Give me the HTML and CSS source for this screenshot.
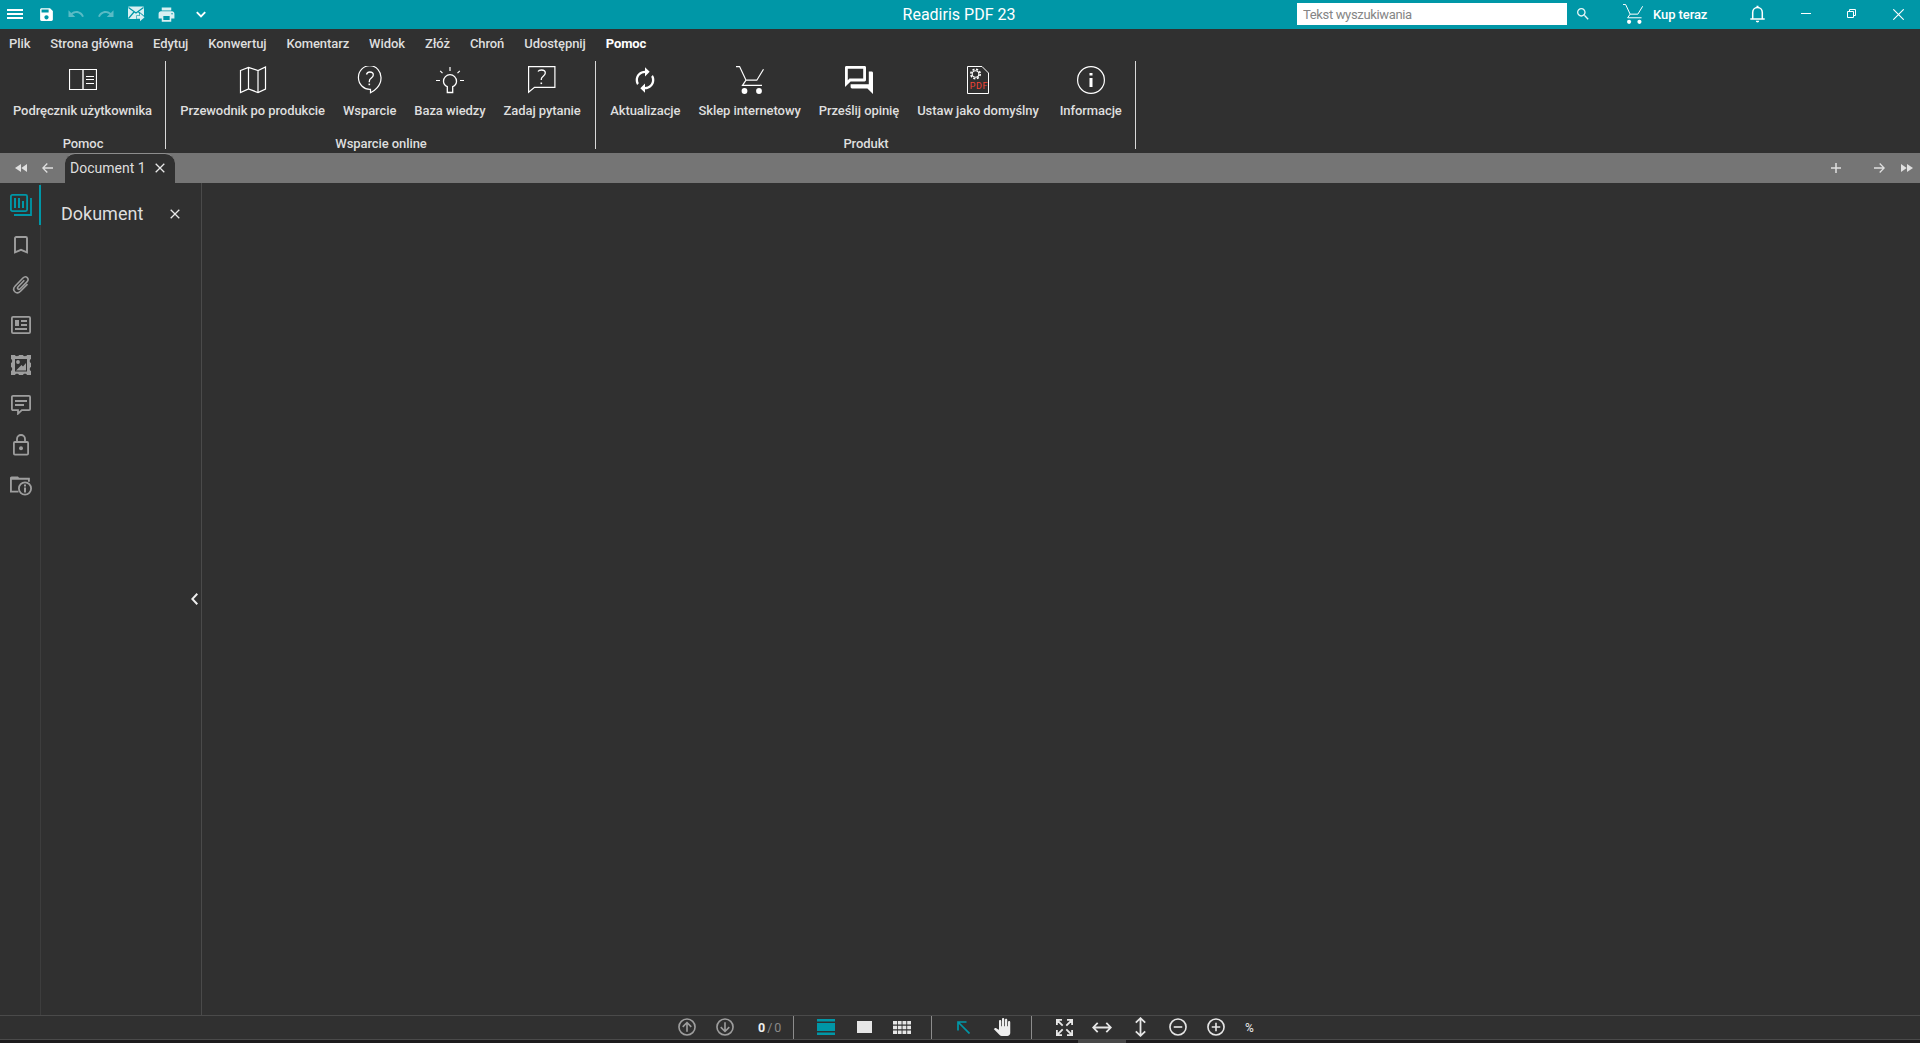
FILE: index.html
```
<!DOCTYPE html>
<html lang="pl">
<head>
    <meta charset="UTF-8">
    <meta name="viewport" content="width=device-width, initial-scale=1.0">
    <title>Readiris PDF 23</title>
    <link rel="stylesheet" href="styles.css">
</head>
<body>
<div class="app">

    <!-- Title bar -->
    <header class="titlebar">
        <div class="quick">
            <button class="qbtn first"><svg width="16" height="10" viewBox="0 0 16 10"><path d="M0 1h16M0 5h16M0 9h16" stroke="#fff" stroke-width="1.800"/></svg></button>
            <button class="qbtn"><svg viewBox="0 0 24 24" fill="#fff" class="save"><path d="M17 3H5c-1.110 0-2 .9-2 2v14c0 1.100.89 2 2 2h14c1.100 0 2-.9 2-2V7l-4-4zm-5 16c-1.660 0-3-1.340-3-3s1.340-3 3-3 3 1.340 3 3-1.340 3-3 3zm3-10H5V5h10v4z"/></svg></button>
            <button class="qbtn dim"><svg width="18" height="18" viewBox="0 0 24 24" fill="#fff"><path d="M12.500 8c-2.650 0-5.050.99-6.900 2.600L2 7v9h9l-3.620-3.620c1.390-1.160 3.160-1.880 5.120-1.880 3.540 0 6.550 2.310 7.600 5.500l2.370-.78C21.080 11.030 17.150 8 12.500 8z"/></svg></button>
            <button class="qbtn dim"><svg width="18" height="18" viewBox="0 0 24 24" fill="#fff"><path d="M18.400 10.600C16.550 8.990 14.150 8 11.500 8c-4.650 0-8.580 3.030-9.960 7.220L3.900 16c1.050-3.190 4.050-5.500 7.600-5.500 1.950 0 3.730.72 5.120 1.880L13 16h9V7l-3.600 3.600z"/></svg></button>
            <button class="qbtn"><svg width="17" height="16" viewBox="0 0 17 16"><path d="M0 1.500Q0 .5 1 .5H15Q16 .5 16 1.500V13H1Q0 13 0 12Z" fill="#d9f0f2"/><path d="M.5 1.500 8 7l7.500-5.500M.5 12.500 6 6M15.500 10 10.500 6" fill="none" stroke="#0097a7" stroke-width="1.200"/><path d="M9 9.800h3V7.300l4.500 4-4.500 4v-2.600H9z" fill="#d9f0f2" stroke="#0097a7" stroke-width="1.200" paint-order="stroke"/></svg></button>
            <button class="qbtn"><svg width="19" height="19" viewBox="0 0 24 24" fill="#d9f0f2"><path d="M19 8H5c-1.660 0-3 1.340-3 3v6h4v4h12v-4h4v-6c0-1.660-1.340-3-3-3zm-3 11H8v-5h8v5zm3-7c-.55 0-1-.45-1-1s.45-1 1-1 1 .45 1 1-.45 1-1 1zm-1-9H6v4h12V3z"/></svg></button>
            <button class="qbtn more"><svg width="10" height="7" viewBox="0 0 10 7"><path d="M.8 1.200 5 5.400 9.200 1.200" fill="none" stroke="#fff" stroke-width="1.900"/></svg></button>
        </div>
        <div class="app-title">Readiris PDF 23</div>
        <div class="title-right">
            <input class="search" type="text" placeholder="Tekst wyszukiwania">
            <button class="tbtn find"><svg width="16" height="16" viewBox="0 0 24 24" fill="#e8f6f7"><path d="M15.500 14h-.79l-.28-.27C15.410 12.590 16 11.110 16 9.500 16 5.910 13.090 3 9.500 3S3 5.910 3 9.500 5.910 16 9.500 16c1.610 0 3.090-.59 4.230-1.570l.27.28v.79l5 4.990L20.490 19l-4.990-5zm-6 0C7.010 14 5 11.990 5 9.500S7.010 5 9.500 5 14 7.010 14 9.500 11.990 14 9.500 14z"/></svg></button>
            <button class="tbtn buy">
                <svg width="20" height="20" viewBox="0 0 28 28"><path d="M0 .6h3.600L10 14.200h10.800L27.500 3.200M10 14.200 6.500 19.300H26" fill="none" stroke="#fff" stroke-width="1.400"/><circle cx="8.500" cy="25" r="2.900" fill="#fff"/><circle cx="23" cy="25" r="2.900" fill="#fff"/></svg>
                <span>Kup teraz</span>
            </button>
            <button class="tbtn bell"><svg width="15" height="18" viewBox="0 0 15 18"><path d="M2.700 13.200V7.500C2.700 4.700 4.600 2.500 7.500 2.500s4.800 2.200 4.800 5v5.700M.3 14h14.400" fill="none" stroke="#fff" stroke-width="1.500"/><path d="M6.500.8h2v2h-2zM5.800 15.700h3.400a1.700 1.700 0 0 1-3.400 0z" fill="#fff"/></svg></button>
            <button class="tbtn minimize"><svg width="10" height="10" viewBox="0 0 10 10"><path d="M0 4.500h10" stroke="#fff"/></svg></button>
            <button class="tbtn restore"><svg width="9" height="10" viewBox="0 0 9 10"><path d="M.5 2.500h6v6h-6zM2.500 2.500v-2h6v6h-2" fill="none" stroke="#fff"/></svg></button>
            <button class="tbtn close"><svg width="11" height="11" viewBox="0 0 11 11"><path d="M.3.3l10.400 10.400M10.700.3.300 10.700" stroke="#fff" stroke-width="1.100"/></svg></button>
        </div>
    </header>

    <!-- Menu -->
    <nav class="menu">
        <a>Plik</a><a>Strona główna</a><a>Edytuj</a><a>Konwertuj</a><a>Komentarz</a><a>Widok</a><a>Złóż</a><a>Chroń</a><a>Udostępnij</a><a class="active">Pomoc</a>
    </nav>

    <!-- Ribbon -->
    <div class="ribbon">
        <section class="group g-help">
            <div class="tools">
                <div class="tool">
                    <svg width="28" height="28" viewBox="0 0 28 28"><path d="M.5 3.500h27v20H.5z" fill="none" stroke="#fff" stroke-width="1.200"/><path d="M14 4v19" stroke="#ccc" stroke-width="1.800"/><path d="M17 10.500h8M17 13.500h8M17 17.500h8" stroke="#fff" stroke-width="1.200"/></svg>
                    <span>Podręcznik użytkownika</span>
                </div>
            </div>
            <div class="group-name">Pomoc</div>
        </section>
        <section class="group g-online">
            <div class="tools">
                <div class="tool">
                    <svg width="28" height="28" viewBox="0 0 28 28"><path d="M1.500 4.500 9.500 1.500l9.500 3 7.500-3.500v22l-7.500 3.500-9.500-3.500-8 3.500zM9.500 1.500V23M19 4.500v22" fill="none" stroke="#fff" stroke-width="1.200"/></svg>
                    <span>Przewodnik po produkcie</span>
                </div>
                <div class="tool">
                    <svg width="28" height="28" viewBox="0 0 28 28"><path d="M14.500 23.300v3.500c4-1.800 10.500-7 10.500-14.500A11.300 11.800 0 1 0 14.500 23.300z" fill="none" stroke="#fff" stroke-width="1.200"/><path d="M10.500 8.500C11 6.500 12 6 13.800 6c2.200 0 3.500 1.100 3.500 3 0 3-4 3.200-4 6.200v1" fill="none" stroke="#fff" stroke-width="1.300"/><path d="M12.500 17.600h1.600v1.600h-1.600z" fill="#fff"/></svg>
                    <span>Wsparcie</span>
                </div>
                <div class="tool">
                    <svg width="28" height="28" viewBox="0 0 28 28"><path d="M11.300 26.500v-5.800C8.800 19.500 7.500 17.700 7.500 15.200a6.500 6.500 0 0 1 13 0c0 2.500-1.300 4.300-3.800 5.500v5.800z" fill="none" stroke="#fff" stroke-width="1.300"/><path d="M14 1v4M0 14.500h4M24 14.500h4M4.200 4.800l2.300 2.300M23.800 4.800l-2.300 2.300" stroke="#fff" stroke-width="1.200"/></svg>
                    <span>Baza wiedzy</span>
                </div>
                <div class="tool">
                    <svg width="28" height="28" viewBox="0 0 28 28"><path d="M.6.6h26.300v20.700H6.500L.6 26.300z" fill="none" stroke="#fff" stroke-width="1.200"/><path d="M10 5.500c.6-1 1.900-1.500 3.500-1.500 2.300 0 3.800 1 3.800 3 0 3-4 3.300-4 6v1" fill="none" stroke="#fff" stroke-width="1.300"/><path d="M12.500 16.500h1.600v1.600h-1.600z" fill="#fff"/></svg>
                    <span>Zadaj pytanie</span>
                </div>
            </div>
            <div class="group-name">Wsparcie online</div>
        </section>
        <section class="group g-product">
            <div class="tools">
                <div class="tool">
                    <svg width="30" height="30" viewBox="0 0 24 24" fill="#fff"><path d="M12 6v3l4-4-4-4v3c-4.420 0-8 3.580-8 8 0 1.570.46 3.030 1.240 4.260L6.700 14.800c-.45-.83-.7-1.790-.7-2.800 0-3.310 2.690-6 6-6zm6.760 1.740L17.300 9.200c.44.84.7 1.790.7 2.800 0 3.310-2.690 6-6 6v-3l-4 4 4 4v-3c4.420 0 8-3.580 8-8 0-1.570-.46-3.030-1.240-4.260z"/></svg>
                    <span>Aktualizacje</span>
                </div>
                <div class="tool">
                    <svg width="28" height="28" viewBox="0 0 28 28"><path d="M0 .6h3.600L10 14.200h10.800L27.500 3.200M10 14.200 6.500 19.300H26" fill="none" stroke="#fff" stroke-width="1.200"/><circle cx="8.500" cy="25" r="2.900" fill="#fff"/><circle cx="23" cy="25" r="2.900" fill="#fff"/></svg>
                    <span>Sklep internetowy</span>
                </div>
                <div class="tool">
                    <svg width="28" height="28" viewBox="2 2 20 20" fill="#fff"><path d="M15 4v7H5.170L4 12.170V4h11m1-2H3c-.55 0-1 .45-1 1v14l4-4h10c.55 0 1-.45 1-1V3c0-.55-.45-1-1-1zm5 4h-2v9H6v2c0 .55.45 1 1 1h11l4 4V7c0-.55-.45-1-1-1z"/></svg>
                    <span>Prześlij opinię</span>
                </div>
                <div class="tool">
                    <svg width="22" height="28" viewBox="0 0 22 28"><path d="M.5.500H15L21.500 7v20.500H.500z" fill="none" stroke="#fff"/><circle cx="8.500" cy="8" r="4.700" fill="none" stroke="#fff" stroke-width="1.600" stroke-dasharray="2.100 1.590"/><circle cx="8.500" cy="8" r="3.300" fill="none" stroke="#fff" stroke-width="1.100"/><text x="2.800" y="22.700" class="pdf-text" textLength="17.500">PDF</text></svg>
                    <span>Ustaw jako domyślny</span>
                </div>
                <div class="tool last">
                    <svg width="28" height="28" viewBox="0 0 28 28"><circle cx="14" cy="14" r="13.400" fill="none" stroke="#fff" stroke-width="1.200"/><path d="M12.500 7h3v2.500h-3zM12.500 12h3v9h-3z" fill="#fff"/></svg>
                    <span>Informacje</span>
                </div>
            </div>
            <div class="group-name">Produkt</div>
        </section>
    </div>

    <!-- Document tabs -->
    <div class="tabs">
        <button class="nav-btn n1"><svg width="12" height="8" viewBox="0 0 12 8" fill="#e0e0e0"><path d="M6 0v8L0 4zM12 0v8L6.300 4z"/></svg></button>
        <button class="nav-btn n2"><svg width="11" height="10" viewBox="0 0 11 10"><path d="M11 5H1M5.300.5.8 5l4.500 4.500" fill="none" stroke="#e0e0e0" stroke-width="1.300"/></svg></button>
        <div class="tab">
            <span>Document 1</span>
            <svg width="10" height="10" viewBox="0 0 10 10"><path d="M.7.7l8.600 8.600M9.300.7.700 9.300" stroke="#e8e8e8" stroke-width="1.300"/></svg>
        </div>
        <div class="tabs-right">
            <button class="nav-btn add"><svg width="10" height="10" viewBox="0 0 10 10"><path d="M0 5h10M5 0v10" stroke="#e0e0e0" stroke-width="1.500"/></svg></button>
            <button class="nav-btn n3"><svg width="11" height="10" viewBox="0 0 11 10"><path d="M0 5h10M5.700.5 10.200 5 5.700 9.500" fill="none" stroke="#e0e0e0" stroke-width="1.300"/></svg></button>
            <button class="nav-btn n4"><svg width="12" height="8" viewBox="0 0 12 8" fill="#e0e0e0"><path d="M6 0v8l6-4zM0 0v8l5.700-4z"/></svg></button>
        </div>
    </div>

    <main class="work">
        <aside class="rail">
            <button class="rail-btn active"><svg width="22" height="22" viewBox="0 0 22 22" fill="none" stroke="#0097a7"><rect x=".9" y=".9" width="16.200" height="16.200" rx="1.500" stroke-width="1.800"/><path d="M5 4v10M9 4v10M13 7v7" stroke-width="2"/><path d="M21 4v17H4" stroke-width="1.800"/></svg></button>
            <button class="rail-btn"><svg width="14" height="18" viewBox="0 0 14 18"><path d="M1 16.300V2.200C1 1.500 1.500 1 2.200 1h9.600c.7 0 1.200.5 1.200 1.200v14.100L7 13.800z" fill="none" stroke="#9e9e9e" stroke-width="1.900"/></svg></button>
            <button class="rail-btn clip"><svg width="18" height="19" viewBox="0 0 18 19"><path d="M12.300 5.300 6.100 11.700c-1.600 1.700.5 3.700 2.100 2.100l6.700-6.900c3-3.200-.8-7-4-3.900L3.200 11c-4 4.200 1.300 9.300 5.300 5.200l7-7.100" fill="none" stroke="#9e9e9e" stroke-width="1.600"/></svg></button>
            <button class="rail-btn"><svg width="20" height="18" viewBox="0 0 20 18"><rect x=".9" y=".9" width="18.200" height="16.200" rx="1.200" fill="none" stroke="#9e9e9e" stroke-width="1.800"/><path d="M4 4h4v6H4zM10 4h6v2h-6zM10 8h6v2h-6zM4 12h12v2H4z" fill="#9e9e9e"/></svg></button>
            <button class="rail-btn"><svg width="20" height="20" viewBox="0 0 20 20"><path fill-rule="evenodd" d="M0 0h4c.3 1.600 3.600 1.600 4 0h4c.3 1.600 3.600 1.600 4 0h4v4c-1.600.3-1.600 3.700 0 4v4c-1.600.3-1.600 3.700 0 4v4h-4c-.4-1.600-3.700-1.600-4 0H8c-.3-1.600-3.600-1.600-4 0H0v-4c1.600-.3 1.600-3.700 0-4V8c1.600-.3 1.600-3.700 0-4zM4 4v12.500h12V4z" fill="#9e9e9e"/><circle cx="7" cy="7" r="1.900" fill="#9e9e9e"/><path d="M5 15.500 10.500 10l1.500 1.500L15 8v7.500z" fill="#9e9e9e"/></svg></button>
            <button class="rail-btn"><svg width="20" height="20" viewBox="0 0 20 20"><path d="M7 15.100H2c-.6 0-1.100-.5-1.100-1.100V2C.9 1.400 1.400.9 2 .9h16c.6 0 1.100.5 1.100 1.100v12c0 .6-.5 1.100-1.100 1.100h-7.200L7 18.700z" fill="none" stroke="#9e9e9e" stroke-width="1.800"/><path d="M4 6h12M4 10h9" stroke="#9e9e9e" stroke-width="2"/></svg></button>
            <button class="rail-btn"><svg width="16" height="22" viewBox="0 0 16 22"><rect x=".9" y="8" width="14.200" height="12.600" rx="1" fill="none" stroke="#9e9e9e" stroke-width="1.800"/><path d="M4 8V5a4 4 0 0 1 8 0v3" fill="none" stroke="#9e9e9e" stroke-width="1.800"/><circle cx="8" cy="14.300" r="2" fill="#9e9e9e"/></svg></button>
            <button class="rail-btn info"><svg width="22" height="20" viewBox="0 0 22 20"><path d="M8.500 15.600H.9V2.800h18v3" fill="none" stroke="#9e9e9e" stroke-width="1.900"/><path d="M0 2Q0 .5 1.500.5H8l2 2.500H0z" fill="#9e9e9e"/><circle cx="15" cy="12.500" r="6.100" fill="#303030" stroke="#9e9e9e" stroke-width="1.800"/><path d="M14 8.500h2v2h-2zM14 11.500h2v5h-2z" fill="#9e9e9e"/></svg></button>
        </aside>
        <aside class="panel">
            <div class="panel-head">
                <h2>Dokument</h2>
                <svg width="10" height="10" viewBox="0 0 10 10"><path d="M.7.7l8.600 8.600M9.300.7.700 9.300" stroke="#e8e8e8" stroke-width="1.300"/></svg>
            </div>
            <button class="collapse"><svg width="7" height="12" viewBox="0 0 7 12"><path d="M6.300.8 1.300 6l5 5.200" fill="none" stroke="#eee" stroke-width="2"/></svg></button>
        </aside>
        <div class="canvas"></div>
    </main>

    <!-- Status bar -->
    <footer class="status">
        <div class="status-group pages">
            <button class="sbtn"><svg width="18" height="18" viewBox="0 0 19 19" fill="none" stroke="#9e9e9e" stroke-width="1.700"><circle cx="9.500" cy="9.500" r="8.500"/><path d="M9.500 14.500V5M5 9.300l4.500-4.500L14 9.300"/></svg></button>
            <button class="sbtn"><svg width="18" height="18" viewBox="0 0 19 19" fill="none" stroke="#9e9e9e" stroke-width="1.700"><circle cx="9.500" cy="9.500" r="8.500"/><path d="M9.500 4.500V14M5 9.700l4.500 4.500L14 9.700"/></svg></button>
            <div class="page-no"><b>0</b><i>/</i><i>0</i></div>
        </div>
        <div class="status-group views">
            <button class="sbtn"><svg width="18" height="16" viewBox="0 0 18 16" fill="#0097a7"><path d="M0 0h18v2.500H0zM0 4h18v8H0zM0 13.500h18V16H0z"/></svg></button>
            <button class="sbtn"><svg width="15" height="12" viewBox="0 0 15 12"><path d="M0 0h15v12H0z" fill="#e6e6e6"/></svg></button>
            <button class="sbtn"><svg width="18" height="13" viewBox="0 0 18 13" fill="#e6e6e6"><path d="M0 0h4v3.600H0zM4.800 0h3.800v3.600H4.800zM9.500 0h3.800v3.600H9.500zM14.200 0H18v3.600h-3.800zM0 4.700h4v3.600H0zM4.800 4.700h3.800v3.600H4.800zM9.500 4.700h3.800v3.600H9.500zM14.200 4.700H18v3.600h-3.800zM0 9.400h4V13H0zM4.800 9.400h3.800V13H4.800zM9.500 9.400h3.800V13H9.500zM14.200 9.400H18V13h-3.800z"/></svg></button>
        </div>
        <div class="status-group modes">
            <button class="sbtn"><svg width="13" height="13" viewBox="0 0 13 13"><path d="M1 9.500V1h8.500M1 1l11.500 11.500" fill="none" stroke="#0097a7" stroke-width="1.700"/></svg></button>
            <button class="sbtn"><svg width="18" height="18" viewBox="0 0 24 24" fill="#eee"><path d="M23 5.500V20c0 2.200-1.800 4-4 4h-7.300c-1.080 0-2.100-.43-2.850-1.190L1 14.830s1.260-1.230 1.300-1.250c.22-.19.49-.29.79-.29.22 0 .42.060.6.160.040.010 4.310 2.460 4.310 2.460V4c0-.83.67-1.500 1.500-1.500S11 3.170 11 4v7h1V1.500c0-.83.67-1.500 1.500-1.500S15 .67 15 1.500V11h1V2.500c0-.83.67-1.500 1.500-1.500s1.500.67 1.500 1.500V11h1V5.500c0-.83.67-1.500 1.500-1.500s1.500.67 1.500 1.500z"/></svg></button>
        </div>
        <div class="status-group zoom">
            <button class="sbtn"><svg width="17" height="17" viewBox="0 0 17 17" fill="none" stroke="#e6e6e6" stroke-width="1.800"><path d="M.9 6V.9H6M11 .9h5.100V6M16.100 11v5.100H11M6 16.100H.9V11M1 1l5.700 5.700M16 1l-5.700 5.700M16 16l-5.700-5.700M1 16l5.700-5.700"/></svg></button>
            <button class="sbtn"><svg width="20" height="11" viewBox="0 0 20 11" fill="none" stroke="#e6e6e6" stroke-width="1.800"><path d="M1 5.500h18M5.700.8 1.200 5.500l4.500 4.700M14.300.8l4.500 4.700-4.500 4.700"/></svg></button>
            <button class="sbtn"><svg width="11" height="20" viewBox="0 0 11 20" fill="none" stroke="#e6e6e6" stroke-width="1.800"><path d="M5.500 1v18M.8 5.700l4.700-4.500 4.700 4.500M.8 14.300l4.700 4.500 4.700-4.500"/></svg></button>
            <button class="sbtn"><svg width="18" height="18" viewBox="0 0 19 19" fill="none" stroke="#e6e6e6" stroke-width="1.700"><circle cx="9.500" cy="9.500" r="8.500"/><path d="M5 9.500h9"/></svg></button>
            <button class="sbtn"><svg width="18" height="18" viewBox="0 0 19 19" fill="none" stroke="#e6e6e6" stroke-width="1.700"><circle cx="9.500" cy="9.500" r="8.500"/><path d="M5 9.500h9M9.500 5v9"/></svg></button>
            <span class="percent">%</span>
        </div>
    </footer>
    <div class="edge"><div class="grip"></div></div>
</div>
</body>
</html>
```

FILE: styles.css
```
* {
    box-sizing: border-box;
}

body {
    margin: 0;
    background-color: #303030;
    color: #dedede;
    font-family: Roboto, "Liberation Sans", sans-serif;
    font-size: 13px;
    overflow: hidden;
}

button {
    display: flex;
    align-items: center;
    justify-content: center;
    padding: 0;
    border: none;
    background: none;
    color: inherit;
    font: inherit;
    flex-shrink: 0;
}

svg {
    display: block;
    flex-shrink: 0;
}

.app {
    display: flex;
    flex-direction: column;
    height: 1043px;
}

/* title bar */
.titlebar {
    display: flex;
    height: 29px;
    background-color: #0097a7;
    color: #fff;
}

.quick {
    display: flex;
    width: 899px;
}

.qbtn {
    width: 30px;
    height: 28px;
}

.qbtn.first {
    width: 31px;
    padding-right: 1px;
}

.qbtn.dim {
    opacity: 0.35;
}

.qbtn.more {
    margin-left: 5px;
}

.save {
    width: 17px;
    height: 17px;
}

.app-title {
    width: 120px;
    text-align: center;
    font-size: 16px;
    line-height: 30px;
    white-space: nowrap;
}

.title-right {
    display: flex;
    flex: 1;
    justify-content: flex-end;
}

.search {
    width: 270px;
    height: 22px;
    margin-top: 3px;
    padding: 0 6px;
    border: none;
    background-color: #fff;
    font-family: Roboto, "Liberation Sans", sans-serif;
    font-size: 13px;
    letter-spacing: -0.35px;
}

.search::placeholder {
    color: #858585;
}

.tbtn {
    height: 28px;
}

.find {
    width: 32px;
}

.buy {
    width: 130px;
    padding-left: 24px;
    justify-content: flex-start;
    gap: 10px;
    font-weight: 500;
    letter-spacing: -0.08px;
    white-space: nowrap;
}

.bell {
    width: 57px;
}

.minimize {
    width: 40px;
}

.restore {
    width: 51px;
}

.close {
    width: 43px;
}

/* menu */
.menu {
    display: flex;
    height: 29px;
    line-height: 29px;
    font-weight: 500;
    letter-spacing: -0.09px;
}

.menu a {
    padding: 0 10px;
}

.menu a:first-child {
    padding-left: 9px;
}

.menu .active {
    color: #fff;
    font-weight: 700;
}

/* ribbon */
.ribbon {
    display: flex;
    height: 95px;
    font-weight: 500;
    letter-spacing: -0.08px;
}

.group {
    display: flex;
    flex-direction: column;
    height: 88px;
    margin-top: 3px;
    border-right: 1px solid #d8d8d8;
}

.g-help {
    width: 166px;
}

.g-online {
    width: 430px;
}

.g-product {
    width: 540px;
}

.tools {
    display: flex;
    justify-content: center;
    height: 75px;
}

.tool {
    display: flex;
    flex-direction: column;
    align-items: center;
    padding: 0 9px;
    white-space: nowrap;
}

.tool svg {
    height: 28px;
    margin-top: 5px;
}

.tool span {
    margin-top: 8px;
    line-height: 18px;
}

.tool.last {
    padding: 0 8px 0 12px;
}

.group-name {
    padding-left: 1px;
    text-align: center;
    line-height: 15px;
    height: 13px;
}

.pdf-text {
    fill: #f44336;
    font-size: 9px;
    font-weight: 400;
}

/* document tabs */
.tabs {
    display: flex;
    height: 30px;
    background-color: #757575;
}

.nav-btn {
    height: 30px;
}

.n1 {
    width: 42px;
}

.n2 {
    width: 23px;
    padding-right: 12px;
}

.tab {
    display: flex;
    align-items: center;
    justify-content: space-between;
    width: 110px;
    padding: 0 10px 1px 5px;
    border-top: 1px solid #8d8d8d;
    border-radius: 10px 10px 0 0;
    background-color: #303030;
    font-size: 14px;
}

.tabs-right {
    display: flex;
    margin-left: auto;
}

.add {
    width: 30px;
    margin-right: 14px;
}

.n3 {
    width: 28px;
}

.n4 {
    width: 27px;
}

/* work area */
.work {
    display: flex;
    flex: 1;
}

.rail {
    width: 41px;
    padding-top: 2px;
    border-right: 1px solid #3d3d3d;
}

.rail-btn {
    width: 40px;
    height: 40px;
    padding-left: 2px;
}

.rail-btn.active {
    width: 41px;
    padding-left: 3px;
    border-right: 2px solid #0097a7;
}

.rail-btn.clip {
    padding-bottom: 1px;
}

.rail-btn.info {
    padding-top: 2px;
}

.panel {
    position: relative;
    width: 161px;
    border-right: 1px solid #4a4a4a;
}

.panel-head {
    display: flex;
    align-items: center;
    justify-content: space-between;
    height: 61px;
    padding: 0 21px 0 20px;
}

.panel-head h2 {
    margin: 0;
    font-size: 18px;
    font-weight: 400;
}

/* sits on the edge of the panel */
.collapse {
    position: absolute;
    top: 410px;
    right: 3px;
}

.canvas {
    flex: 1;
}

/* status bar */
.status {
    display: flex;
    justify-content: center;
    height: 25px;
    border-top: 1px solid #4a4a4a;
    border-bottom: 1px solid #4a4a4a;
}

.status-group {
    display: flex;
    align-items: center;
    border-right: 1px solid #8c8c8c;
}

.status-group.zoom {
    border-right: none;
}

.sbtn {
    width: 38px;
    height: 23px;
    padding-bottom: 1px;
}

.pages {
    width: 126px;
}

.page-no {
    display: flex;
    gap: 2px;
    margin-left: 14px;
    color: #8a8a8a;
    font-size: 12.5px;
}

.page-no b {
    color: #eee;
}

.page-no i {
    font-style: normal;
}

.views {
    width: 138px;
    padding-left: 13px;
}

.modes {
    width: 100px;
    padding-left: 12px;
}

.modes .sbtn:last-child {
    padding-left: 2px;
}

.zoom {
    width: 220px;
    padding-left: 13px;
}

.percent {
    margin-left: 10px;
    font-size: 12px;
    font-weight: 500;
}

.edge {
    height: 3px;
    background-color: #1d1b1d;
}

.grip {
    width: 48px;
    height: 3px;
    margin-left: 1078px;
    background-color: #484848;
}
```
